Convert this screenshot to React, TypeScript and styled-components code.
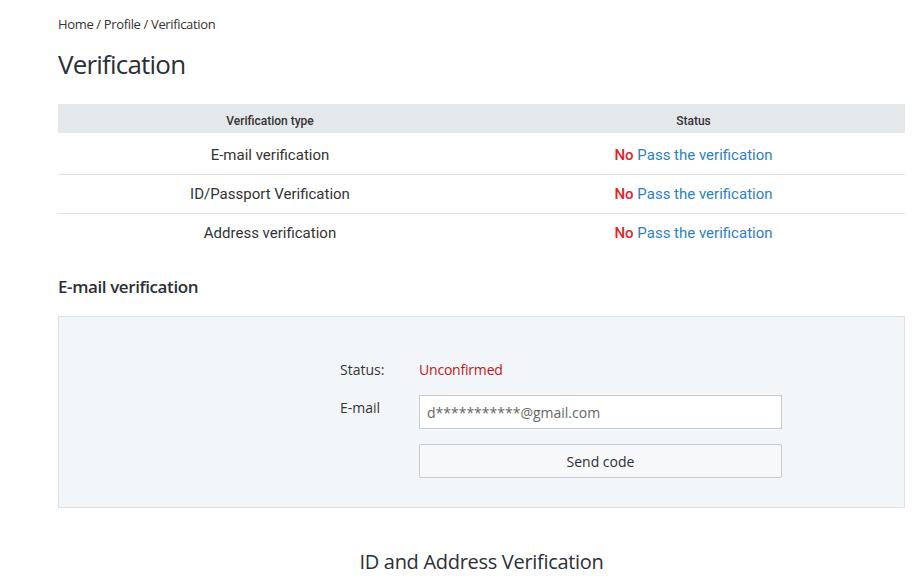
import React from "react";
import styled, { createGlobalStyle } from "styled-components";

const Global = createGlobalStyle`
  html, body { margin: 0; padding: 0; background: #fff; }
  body { font-family: "Open Sans", "Noto Sans", sans-serif; color: #333; }
  * { box-sizing: border-box; }
`;

const Page = styled.div`
  padding: 0 17px 0 58px;
  width: 922px;
`;

const Breadcrumb = styled.div`
  font-size: 13px;
  color: #333;
  padding-top: 15px;
  line-height: 18px;
  letter-spacing: -0.35px;
`;

const Title = styled.h1`
  margin: 13px 0 0;
  font-size: 26px;
  font-weight: 400;
  line-height: 36px;
  letter-spacing: -0.8px;
  color: #2b3036;
`;

const Table = styled.div`
  margin-top: 22px;
  font-family: Roboto, sans-serif;
`;

const HeadRow = styled.div`
  display: grid;
  grid-template-columns: 424px 1fr;
  background: #e5e8eb;
  height: 29px;
  align-items: center;
  font-size: 12px;
  font-weight: 500;
  color: #333;
  text-align: center;
  padding-top: 4px;
  margin-bottom: 3px;
`;

const Row = styled.div<{ $last?: boolean }>`
  display: grid;
  grid-template-columns: 424px 1fr;
  height: 39px;
  align-items: center;
  text-align: center;
  font-size: 15px;
  color: #333;
  border-bottom: 1px solid ${(p) => (p.$last ? "transparent" : "#dee2e6")};
`;

const No = styled.span`
  color: #e0242a;
  font-weight: 500;
`;

const Link = styled.a`
  color: #2f80c2;
  text-decoration: none;
`;

const SubTitle = styled.h2`
  margin: 22px 0 0;
  font-size: 17px;
  font-weight: 600;
  line-height: 24px;
  letter-spacing: -0.4px;
  color: #2b3036;
`;

const Panel = styled.div`
  margin-top: 17px;
  background: #f3f6f9;
  border: 1px solid #dde2e6;
  height: 192px;
  padding-top: 43px;
`;

const FormGrid = styled.div`
  display: grid;
  grid-template-columns: 45px 363px;
  column-gap: 34px;
  padding-left: 281px;
  align-items: start;
`;

const Label = styled.div<{ $mt?: number }>`
  font-size: 14px;
  color: #333;
  line-height: 20px;
  white-space: nowrap;
  margin-top: ${(p) => p.$mt ?? 0}px;
`;

const StatusValue = styled.div`
  font-size: 14px;
  color: #c3141c;
  line-height: 20px;
  letter-spacing: -0.2px;
`;

const Input = styled.input`
  margin-top: 15px;
  width: 363px;
  height: 34px;
  border: 1px solid #c9ccd0;
  background: #fff;
  font-family: "Open Sans", sans-serif;
  font-size: 14px;
  color: #666;
  padding: 0 7px;
  outline: none;
`;

const Button = styled.button`
  margin-top: 15px;
  width: 363px;
  height: 34px;
  border: 1px solid #c9ccd0;
  border-radius: 2px;
  background: #f7f8f9;
  font-family: "Open Sans", sans-serif;
  font-size: 14px;
  color: #2b3036;
  cursor: pointer;
`;

const Spacer = styled.div``;

const SectionTitle = styled.h2`
  margin: 40px 0 0;
  text-align: center;
  font-size: 20px;
  font-weight: 400;
  letter-spacing: -0.3px;
  color: #2b3036;
  line-height: 28px;
`;

const rows = ["E-mail verification", "ID/Passport Verification", "Address verification"];

export default function App() {
  return (
    <>
      <Global />
      <Page>
        <Breadcrumb>Home / Profile / Verification</Breadcrumb>
        <Title>Verification</Title>
        <Table>
          <HeadRow>
            <div>Verification type</div>
            <div>Status</div>
          </HeadRow>
          {rows.map((r, i) => (
            <Row key={r} $last={i === rows.length - 1}>
              <div>{r}</div>
              <div>
                <No>No</No> <Link href="#">Pass the verification</Link>
              </div>
            </Row>
          ))}
        </Table>
        <SubTitle>E-mail verification</SubTitle>
        <Panel>
          <FormGrid>
            <Label>Status:</Label>
            <StatusValue>Unconfirmed</StatusValue>
            <Label $mt={18}>E-mail</Label>
            <Input readOnly value="d***********@gmail.com" />
            <Spacer />
            <Button>Send code</Button>
          </FormGrid>
        </Panel>
        <SectionTitle>ID and Address Verification</SectionTitle>
      </Page>
    </>
  );
}
